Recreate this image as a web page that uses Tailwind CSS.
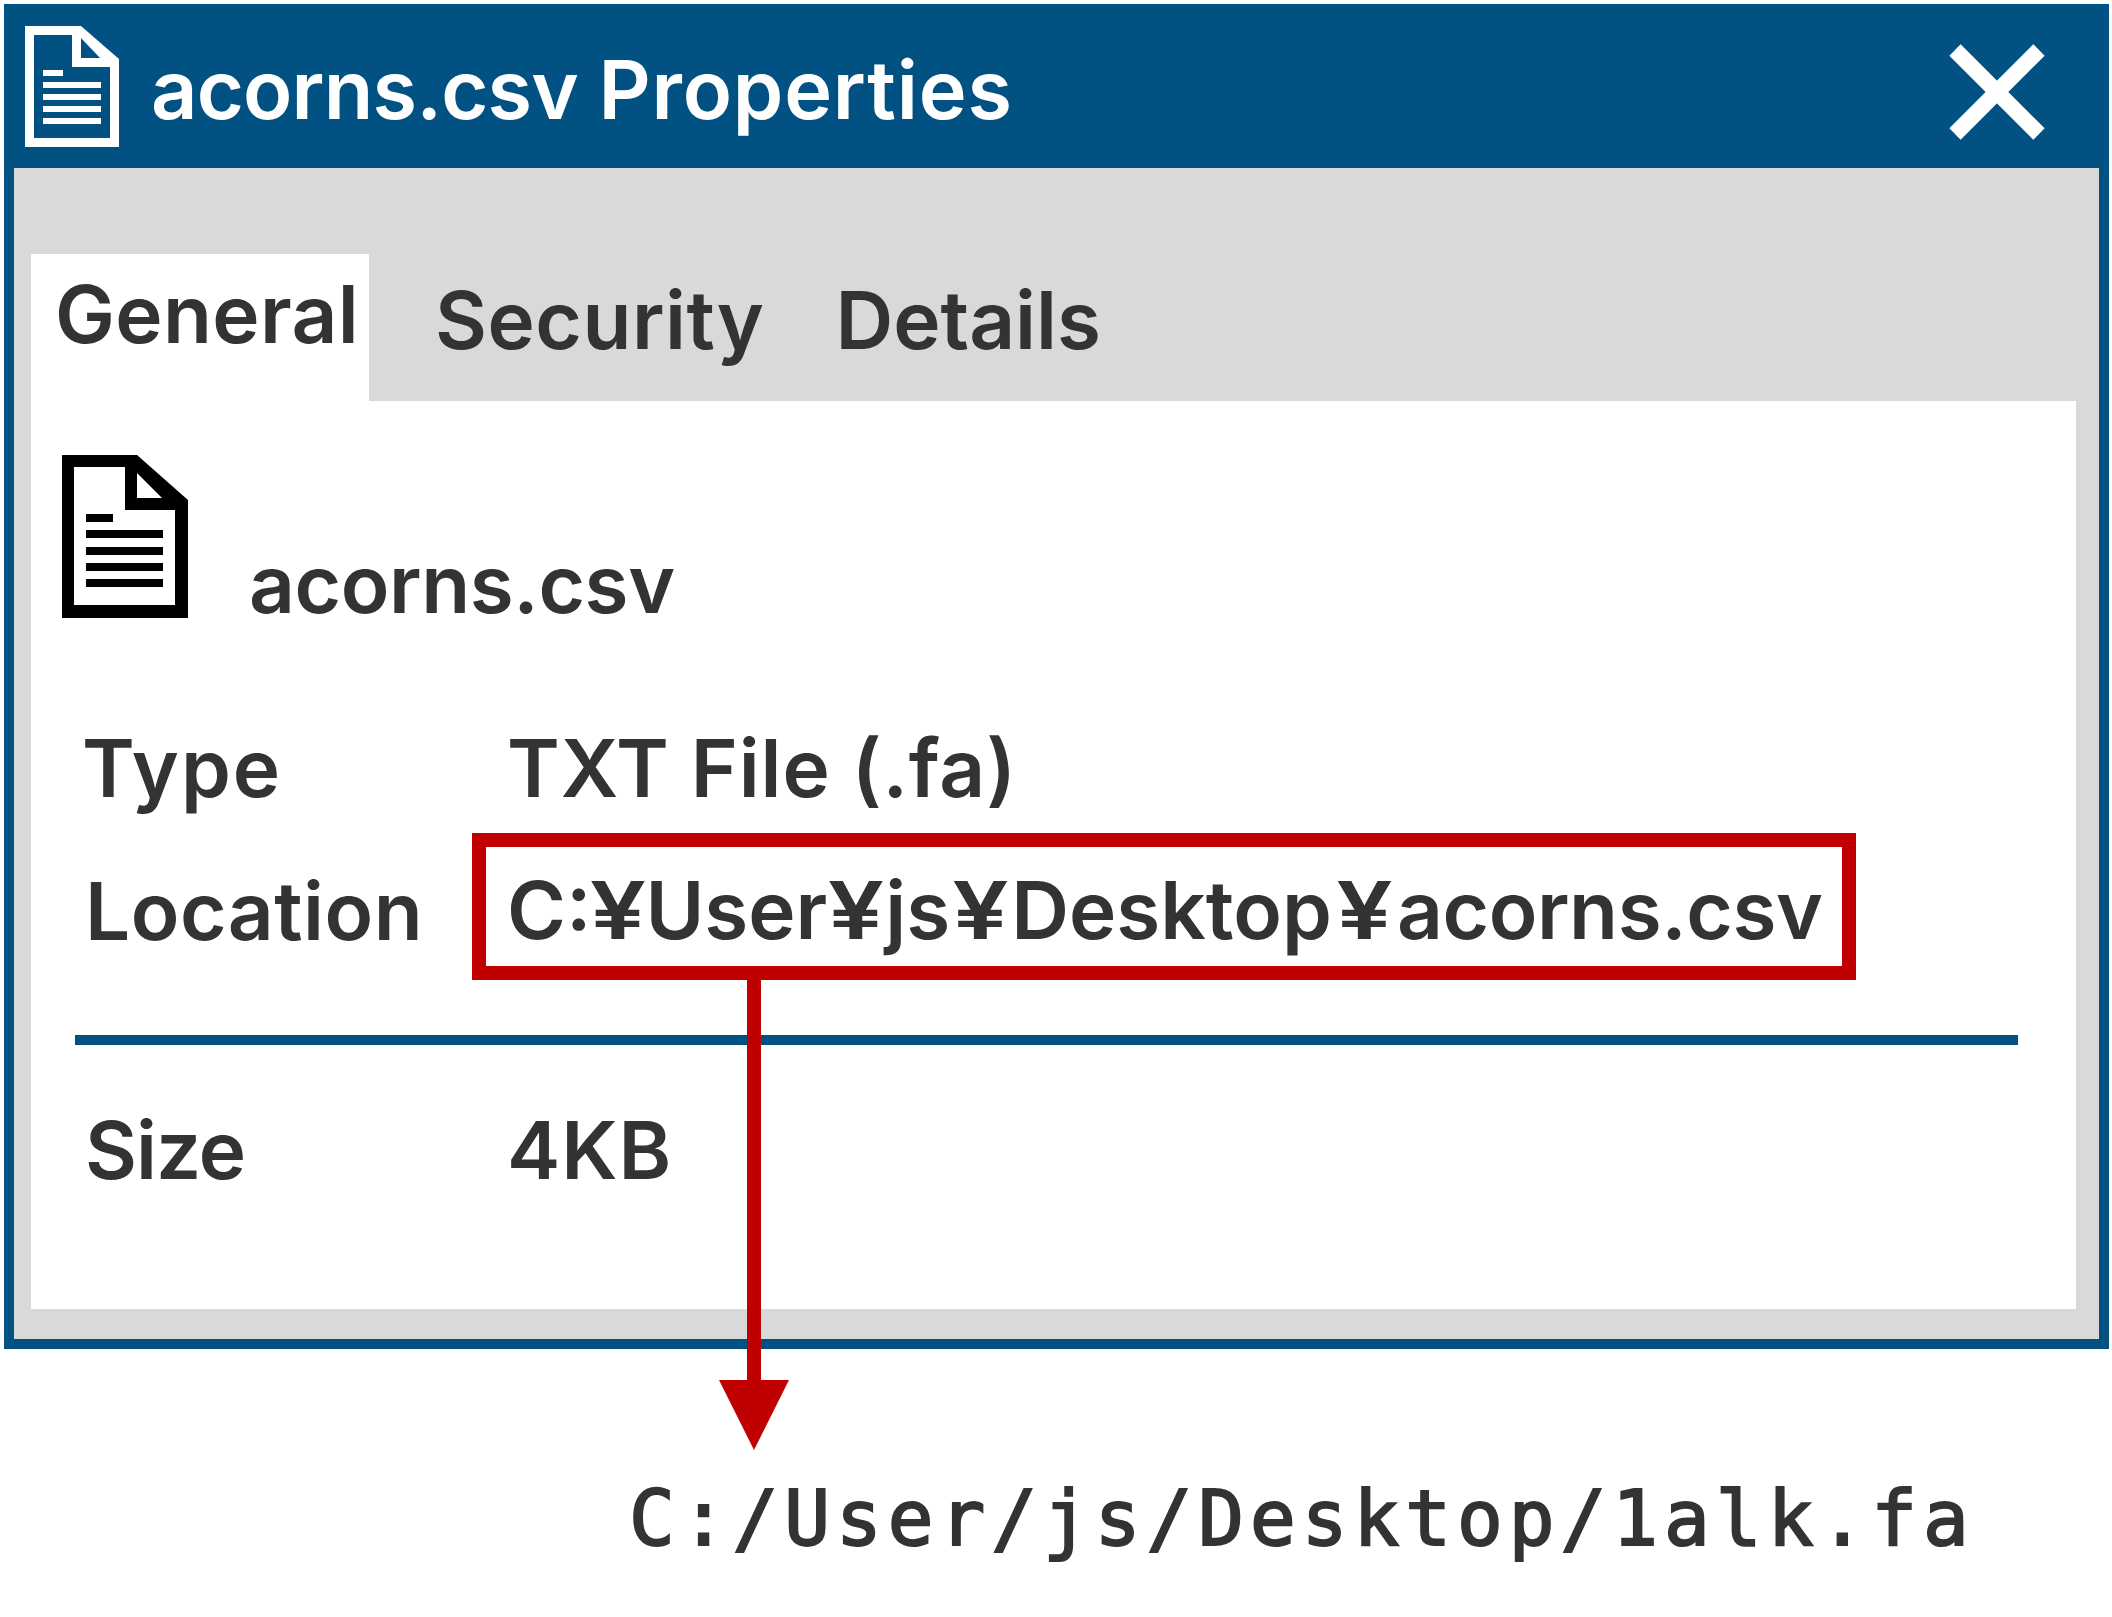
<!DOCTYPE html>
<html lang="en">
<head>
  <meta charset="UTF-8">
  <title>acorns.csv Properties</title>
  <script src="https://cdn.jsdelivr.net/npm/@tailwindcss/browser@4"></script>
</head>
<body class="bg-white">
  <div class="relative w-[2112px] h-[1617px] overflow-hidden pt-[4px] pl-[4px] font-['Inter','Liberation_Sans',sans-serif] font-semibold text-[#333333]">

    <!-- window -->
    <div class="w-[2105px] h-[1345px] border-[10px] border-t-0 border-[#015283] bg-[#d9d9d9]">
      <!-- title bar -->
      <div class="flex items-center h-[164px] -mx-px pl-[12px] pr-[55px] bg-[#015283] text-white">
        <svg class="shrink-0" width="94" height="121" viewBox="0 0 94 121">
          <path fill="#ffffff" fill-rule="evenodd" d="M0 0H56L94 33V121H0ZM9 9V112H85V41H47V9ZM56 12V32H75ZM18 44H38V50H18ZM18 56H76V62H18ZM18 68H76V74H18ZM18 80H76V86H18ZM18 92H76V98H18Z"/>
        </svg>
        <h1 class="ml-[32px] mt-[8px] text-[81px] leading-none font-semibold"><span class="tracking-[-0.8px]">acorns.csv</span> <span class="tracking-[0.8px]">Properties</span></h1>
        <svg class="ml-auto mt-[12px] shrink-0" width="96" height="96" viewBox="0 0 96 96">
          <path stroke="#ffffff" stroke-width="16" d="M6 6L90 90M90 6L6 90"/>
        </svg>
      </div>

      <div class="pt-[86px] pl-[17px] pr-[23px]">
        <!-- tabs -->
        <div class="flex h-[147px] text-[80px] leading-none">
          <div class="w-[338px] pt-[20px] pl-[24px] bg-white tracking-[0.4px]">General</div>
          <div class="ml-[66px] pt-[26px] tracking-[0.5px]">Security</div>
          <div class="ml-[71px] pt-[26px]">Details</div>
        </div>

        <!-- panel -->
        <div class="h-[908px] bg-white pt-[54px] text-[80px] leading-none">
          <div class="flex items-start ml-[31px] h-[170px]">
            <svg class="shrink-0" width="126" height="163" viewBox="0 0 126 163">
              <path fill="#000000" fill-rule="evenodd" d="M0 0H75L126 45V163H0ZM12 12V150H113V55H63V12ZM75 18V43H100ZM24 59H51V67H24ZM24 75H101V83H24ZM24 92H101V100H24ZM24 108H101V116H24ZM24 124H101V132H24Z"/>
            </svg>
            <div class="ml-[61px] mt-[89px] tracking-[-0.4px]">acorns.csv</div>
          </div>

          <div class="mt-[103px] ml-[51px] grid grid-cols-[425px_1fr]">
            <div class="tracking-[2px]">Type</div>
            <div class="tracking-[0.9px]">TXT File (.fa)</div>
            <div class="mt-[25px] pt-[38px] pl-[3px] tracking-[0.5px]">Location</div>
            <div class="mt-[25px] -ml-[35px] w-[1384px] h-[147px] border-[14px] border-[#c00000] pl-[21px] pt-[23px] whitespace-nowrap">C:<span class="inline-block w-[54px] text-center scale-x-[1.25]">¥</span>User<span class="inline-block w-[58px] text-center scale-x-[1.25]">¥</span>js<span class="inline-block w-[61px] text-center scale-x-[1.25]">¥</span>Desktop<span class="inline-block w-[65px] text-center scale-x-[1.25]">¥</span><span class="tracking-[-0.4px]">acorns.csv</span></div>
          </div>

          <div class="mt-[55px] ml-[44px] w-[1943px] h-[10px] bg-[#015283]"></div>

          <div class="mt-[65px] ml-[51px] grid grid-cols-[425px_1fr]">
            <div class="pl-[3px] tracking-[-1px]">Size</div>
            <div class="tracking-[1px]">4KB</div>
          </div>
        </div>
      </div>
    </div>

    <!-- path below the window -->
    <div class="mt-[132px] pl-[625px] font-['DejaVu_Sans_Mono',monospace] font-normal text-[76px] leading-none tracking-[6px] whitespace-nowrap [-webkit-text-stroke:2px_#333333]">C:/User/js/Desktop/1alk.fa</div>

    <!-- arrow from the location box -->
    <svg class="absolute left-[719px] top-[980px]" width="70" height="470" viewBox="0 0 70 470">
      <path fill="#c00000" d="M28 0H42V400H70L35 470L0 400H28Z"/>
    </svg>
  </div>
</body>
</html>
